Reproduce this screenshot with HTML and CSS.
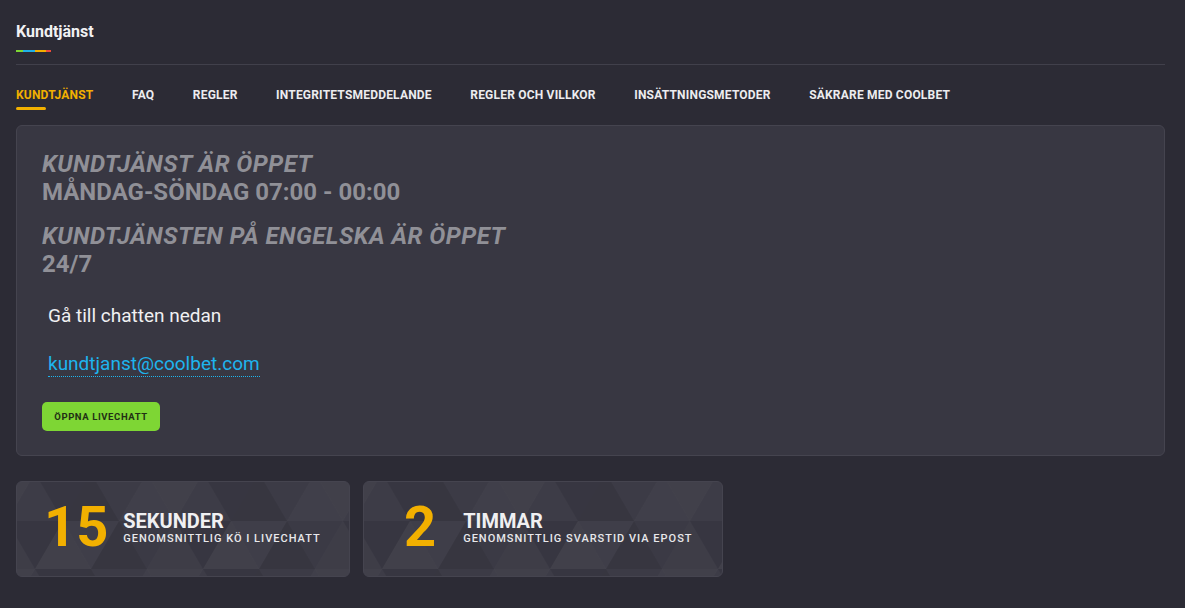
FILE: index.html
```html
<!DOCTYPE html>
<html lang="sv">
<head>
<meta charset="utf-8">
<title>Kundtjänst</title>
<link rel="stylesheet" href="styles.css">
</head>
<body>
<svg class="defs" width="0" height="0" aria-hidden="true">
  <defs>
    <pattern id="tri" width="168" height="96" patternUnits="userSpaceOnUse" patternTransform="translate(-10,-9)">
      <polygon points="0,48 56,48 28,0" fill="#ffffff" opacity="0.02"/>
      <polygon points="56,48 112,48 84,0" fill="#000000" opacity="0.04"/>
      <polygon points="112,48 168,48 140,0" fill="#ffffff" opacity="0.035"/>
      <polygon points="-28,0 28,0 0,48" fill="#ffffff" opacity="0.04"/>
      <polygon points="140,0 196,0 168,48" fill="#ffffff" opacity="0.04"/>
      <polygon points="28,0 84,0 56,48" fill="#000000" opacity="0.03"/>
      <polygon points="84,0 140,0 112,48" fill="#ffffff" opacity="0.015"/>
      <polygon points="0,48 56,48 28,96" fill="#000000" opacity="0.035"/>
      <polygon points="56,48 112,48 84,96" fill="#ffffff" opacity="0.03"/>
      <polygon points="112,48 168,48 140,96" fill="#ffffff" opacity="0.01"/>
      <polygon points="-28,96 28,96 0,48" fill="#ffffff" opacity="0.025"/>
      <polygon points="140,96 196,96 168,48" fill="#ffffff" opacity="0.025"/>
      <polygon points="28,96 84,96 56,48" fill="#ffffff" opacity="0.04"/>
      <polygon points="84,96 140,96 112,48" fill="#000000" opacity="0.04"/>
    </pattern>
  </defs>
</svg>
<div class="page">
  <header class="page-head">
    <h1 class="page-title">Kundtjänst</h1>
    <div class="rainbow"><span class="g"></span><span class="b"></span><span class="y"></span><span class="r"></span></div>
  </header>
  <nav class="tabs">
    <a class="tab active">KUNDTJÄNST</a>
    <a class="tab">FAQ</a>
    <a class="tab">REGLER</a>
    <a class="tab">INTEGRITETSMEDDELANDE</a>
    <a class="tab">REGLER OCH VILLKOR</a>
    <a class="tab">INSÄTTNINGSMETODER</a>
    <a class="tab">SÄKRARE MED COOLBET</a>
  </nav>
  <section class="info-card">
    <div class="hours">
      <div class="hours-title">KUNDTJÄNST ÄR ÖPPET</div>
      <div class="hours-time">MÅNDAG-SÖNDAG 07:00 - 00:00</div>
    </div>
    <div class="hours">
      <div class="hours-title">KUNDTJÄNSTEN PÅ ENGELSKA ÄR ÖPPET</div>
      <div class="hours-time">24/7</div>
    </div>
    <p class="chat-text">Gå till chatten nedan</p>
    <p class="mail-row"><a class="mail">kundtjanst@coolbet.com</a></p>
    <button class="chat-btn">ÖPPNA LIVECHATT</button>
  </section>
  <div class="stats">
    <div class="stat stat-a">
      <svg class="pattern"><rect width="100%" height="100%" fill="url(#tri)"/></svg>
      <div class="stat-num">15</div>
      <div class="stat-text">
        <div class="stat-unit">SEKUNDER</div>
        <div class="stat-sub">GENOMSNITTLIG KÖ I LIVECHATT</div>
      </div>
    </div>
    <div class="stat stat-b">
      <svg class="pattern"><rect width="100%" height="100%" fill="url(#tri)"/></svg>
      <div class="stat-num">2</div>
      <div class="stat-text">
        <div class="stat-unit">TIMMAR</div>
        <div class="stat-sub">GENOMSNITTLIG SVARSTID VIA EPOST</div>
      </div>
    </div>
  </div>
</div>
</body>
</html>
```
FILE: styles.css
```css
* { box-sizing: border-box; }
html, body { margin: 0; padding: 0; }
body {
  background: #2c2b35;
  font-family: Roboto, "Noto Sans", "Liberation Sans", sans-serif;
  color: #e9e9ec;
  width: 1185px;
  height: 608px;
  overflow: hidden;
}
.defs { position: absolute; width: 0; height: 0; }
.page { padding: 0 20px 0 16px; }
.page-head {
  padding-top: 23px;
  border-bottom: 1px solid #41404b;
  padding-bottom: 12px;
}
.page-title {
  margin: 0;
  font-size: 16px;
  font-weight: 700;
  line-height: 18px;
  color: #f1f1f3;
}
.rainbow { display: flex; margin-top: 9px; height: 2px; width: 35px; }
.rainbow span { height: 2px; }
.rainbow .g { width: 7px; background: #7ed634; }
.rainbow .b { width: 12px; background: #1fb1e8; }
.rainbow .y { width: 11px; background: #f2b000; }
.rainbow .r { width: 5px; background: #ef4b3a; }

.tabs {
  display: flex;
  gap: 38.5px;
  padding-top: 23px;
  height: 60px;
}
.tab {
  font-size: 12px;
  font-weight: 700;
  letter-spacing: 0.2px;
  color: #ececef;
  line-height: 14px;
  height: 22px;
  position: relative;
}
.tab.active { color: #f2b000; }
.tab.active::after {
  content: "";
  position: absolute;
  left: 0;
  top: 19px;
  width: 30px;
  height: 3px;
  border-radius: 2px;
  background: #f2b000;
}

.info-card {
  background: #383742;
  border: 1px solid #45444f;
  border-radius: 6px;
  padding: 24px 25px 23px 25px;
  height: 331px;
}
.hours { color: #909097; font-weight: 700; font-size: 24px; line-height: 28px; }
.hours + .hours { margin-top: 16px; }
.hours-title { font-style: italic; letter-spacing: 0.45px; }
.hours-time { letter-spacing: 0; }
.chat-text {
  margin: 26px 0 0 6px;
  font-size: 19px;
  line-height: 24px;
  color: #f0f0f2;
}
.mail-row { margin: 24px 0 0 6px; line-height: 24px; font-size: 19px; }
.mail {
  color: #1eb4ee;
  border-bottom: 1px dotted #1eb4ee;
  padding-bottom: 1px;
}
.chat-btn {
  display: block;
  margin-top: 26px;
  background: #7ed634;
  border: none;
  border-radius: 5px;
  width: 118px;
  height: 29px;
  font-family: Roboto, sans-serif;
  font-size: 9.5px;
  font-weight: 700;
  letter-spacing: 0.6px;
  color: #223014;
  padding: 0;
}

.stats { display: flex; gap: 13px; margin-top: 25px; }
.stat {
  position: relative;
  overflow: hidden;
  height: 96px;
  background: #393843;
  border: 1px solid #45444f;
  border-radius: 6px;
  display: flex;
  align-items: center;
}
.stat-a { width: 334px; padding-left: 27px; }
.stat-b { width: 360px; padding-left: 40px; }
.pattern { position: absolute; left: 0; top: 0; width: 100%; height: 100%; }
.stat-num {
  position: relative;
  font-size: 56px;
  font-weight: 700;
  color: #f2b000;
  line-height: 56px;
  margin-top: -4px;
}
.stat-a .stat-num { margin-right: 15px; }
.stat-b .stat-num { margin-right: 27px; }
.stat-text { position: relative; margin-top: -4px; }
.stat-unit { font-size: 20px; font-weight: 700; color: #f0f0f2; line-height: 22px; }
.stat-sub { font-size: 11px; font-weight: 500; letter-spacing: 1px; color: #e8e8eb; line-height: 13px; margin-top: 0; }
```
